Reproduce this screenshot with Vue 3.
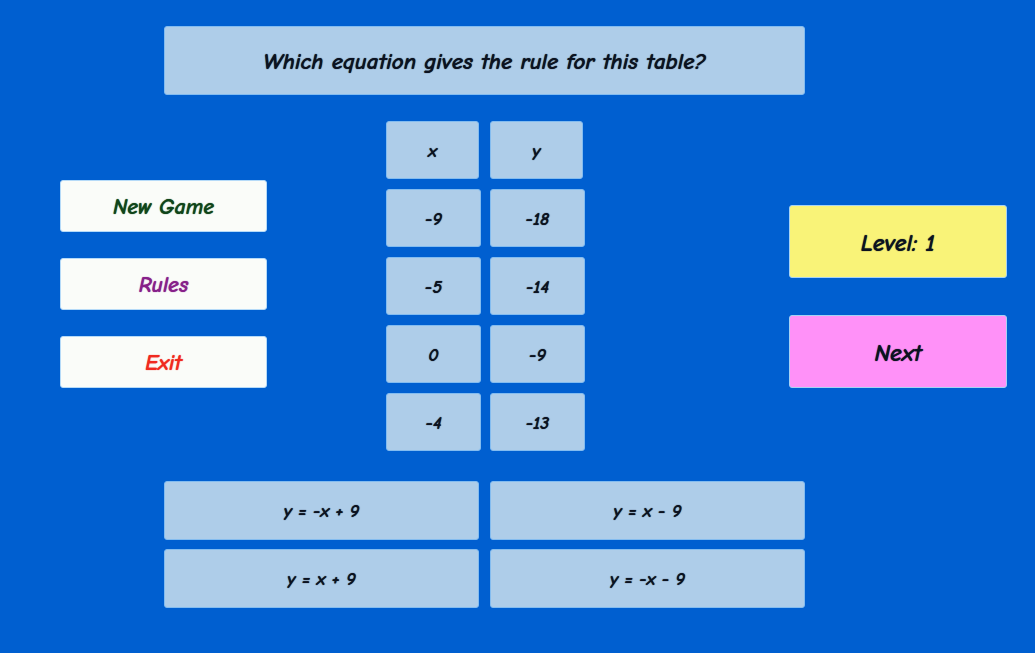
<script setup>
import { ref } from 'vue'

const menu = [
  { label: 'New Game', tone: 'green' },
  { label: 'Rules', tone: 'purple' },
  { label: 'Exit', tone: 'red' },
]

const rows = [
  [-9, -18],
  [-5, -14],
  [0, -9],
  [-4, -13],
]

const answers = ['y = -x + 9', 'y = x - 9', 'y = x + 9', 'y = -x - 9']

const level = ref(1)
</script>

<template>
  <main class="game">
    <h1 class="tile question">Which equation gives the rule for this table?</h1>

    <nav class="menu">
      <button
        v-for="item in menu"
        :key="item.label"
        type="button"
        class="tile menu-button"
        :class="item.tone"
      >{{ item.label }}</button>
    </nav>

    <table class="values">
      <thead>
        <tr>
          <th scope="col"><div class="tile cell head">x</div></th>
          <th scope="col"><div class="tile cell head">y</div></th>
        </tr>
      </thead>
      <tbody>
        <tr v-for="(row, i) in rows" :key="i">
          <td v-for="(value, j) in row" :key="j"><div class="tile cell">{{ value }}</div></td>
        </tr>
      </tbody>
    </table>

    <aside class="status">
      <div class="tile status-tile level">Level: {{ level }}</div>
      <button type="button" class="tile status-tile next">Next</button>
    </aside>

    <section class="answers">
      <button v-for="answer in answers" :key="answer" type="button" class="tile answer">{{ answer }}</button>
    </section>
  </main>
</template>

<style>
body {
  margin: 0;
  background: #005fd0;
}
</style>

<style scoped>
.game {
  display: grid;
  grid-template-columns:
    minmax(0, 60fr) minmax(0, 104fr) minmax(0, 103fr) minmax(0, 119fr) minmax(0, 199fr)
    minmax(0, 204fr) minmax(0, 16fr) minmax(0, 202fr) minmax(0, 28fr);
  align-items: start;
  padding: 26px 0;
  color: #0b1220;
  font-family: "Comic Sans MS", "Comic Neue", Lato, sans-serif;
  font-size: 18px;
  font-style: italic;
  font-weight: 700;
}

.tile {
  display: flex;
  align-items: center;
  justify-content: center;
  box-sizing: border-box;
  margin: 0;
  padding: 2px 8px 0;
  border: 1px solid #83bcf0;
  border-radius: 3px;
  background: #aecde9;
  color: inherit;
  font: inherit;
  text-align: center;
  text-shadow: 0 0 1px currentColor;
}

.question {
  grid-column: 3 / 8;
  grid-row: 1;
  min-height: 69px;
  font-size: 23px;
}

.menu {
  grid-column: 2 / 4;
  grid-row: 2;
  display: grid;
  gap: 26px;
  margin-top: 85px;
}

.menu-button {
  min-height: 52px;
  border-color: #b5daf8;
  background: #fafcf9;
  font-size: 22px;
}

.green { color: #10451a; }
.purple { color: #87208a; }
.red { color: #f02a20; }

.values {
  grid-column: 5 / 6;
  grid-row: 2;
  width: calc(100% + 18px);
  margin: 16px -9px 0;
  border-spacing: 9px 10px;
  table-layout: fixed;
}

.values th,
.values td {
  padding: 0;
}

.cell {
  min-height: 58px;
}

.head {
  margin-right: 2px;
}

.status {
  grid-column: 7 / 9;
  grid-row: 2;
  display: grid;
  gap: 37px;
  margin-top: 110px;
}

.status-tile {
  min-height: 73px;
  border-color: #a6d2f4;
  font-size: 24px;
}

.level { background: #f9f378; }
.next { background: #ff91f8; }

.answers {
  grid-column: 3 / 8;
  grid-row: 3;
  display: grid;
  grid-template-columns: 1fr 1fr;
  gap: 9px 11px;
  margin-top: 20px;
}

.answer {
  min-height: 59px;
}
</style>
